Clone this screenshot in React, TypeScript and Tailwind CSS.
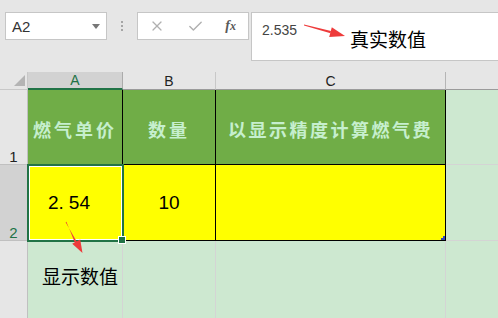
import React from 'react';
import { X, Check } from 'lucide-react';

const cjk = "font-['Liberation_Sans','Noto_Sans_CJK_SC',sans-serif]";

export default function App() {
  return (
    <div className={`relative w-[498px] h-[318px] overflow-hidden bg-[#e6e6e6] ${cjk}`}>
      {/* formula bar */}
      <div className="h-[72px] flex items-start pt-[12px] pl-[5px]">
        <div className="w-[102px] h-[28px] border border-[#c6c6c6] bg-white flex items-center justify-between pl-[6px] pr-[6px]">
          <span className="text-[15px] text-[#333] leading-none">A2</span>
          <svg width="8" height="5" viewBox="0 0 8 5">
            <path d="M0 0 L8 0 L4 5 Z" fill="#777" />
          </svg>
        </div>
        <div className="w-[30px] h-[28px] flex flex-col items-center justify-center gap-[2px]">
          <span className="w-[2px] h-[2px] bg-[#a5a5a5]" />
          <span className="w-[2px] h-[2px] bg-[#a5a5a5]" />
          <span className="w-[2px] h-[2px] bg-[#a5a5a5]" />
        </div>
        <div className="w-[112px] h-[28px] border border-[#c6c6c6] bg-white flex items-center pl-[11px] pr-[12px] justify-between">
          <X size={16} strokeWidth={1.8} color="#b0b0b0" />
          <Check size={17} strokeWidth={2} color="#b0b0b0" />
          <span className="font-['Liberation_Serif',serif] italic font-bold text-[14px] text-[#5a5a5a] leading-none">
            f<span className="text-[12px]">x</span>
          </span>
        </div>
        <div className="ml-[2px] flex-1 -mr-[1px] h-[49px] border border-[#c6c6c6] bg-white pl-[10px] pt-[5px]">
          <span className="text-[14px] text-[#444] leading-[18px]">2.535</span>
        </div>
      </div>

      {/* sheet */}
      <div className="relative grid grid-cols-[28px_95px_93px_230px_1fr] grid-rows-[18px_75px_76px_77px]">
        {/* column headers */}
        <div className="relative bg-[#e6e6e6] border-b border-[#9b9b9b] border-r border-[#c8c8c8]">
          <svg className="absolute left-0 top-0" width="28" height="18" viewBox="0 0 28 18">
            <path d="M14 14 L25 14 L25 3 Z" fill="#b4b4b4" />
          </svg>
        </div>
        <div className="bg-[#d2d2d2] border-b-2 border-b-[#217346] border-r border-r-[#ababab] flex items-center justify-center text-[14px] text-[#217346] leading-none">
          A
        </div>
        <div className="bg-[#e6e6e6] border-b border-b-[#9b9b9b] border-r border-r-[#c8c8c8] flex items-center justify-center text-[14px] text-[#222] leading-none">
          B
        </div>
        <div className="bg-[#e6e6e6] border-b border-b-[#9b9b9b] border-r border-r-[#b5b5b5] flex items-center justify-center text-[14px] text-[#222] leading-none">
          C
        </div>
        <div className="bg-[#e6e6e6] border-b border-b-[#9b9b9b]" />

        {/* row 1 */}
        <div className="bg-[#e6e6e6] border-b border-b-[#c0c0c0] border-r border-r-[#c0c0c0] flex items-end justify-center text-[15px] text-[#222] leading-[14px]">
          1
        </div>
        <div className="bg-[#70ad47] border-r border-b border-black flex items-center justify-center pt-[5px] font-bold text-[18px] tracking-[3px] text-[#c6efce] font-['Noto_Sans_CJK_SC',sans-serif]">
          燃气单价
        </div>
        <div className="bg-[#70ad47] border-r border-b border-black flex items-center justify-center pt-[5px] font-bold text-[18px] tracking-[3px] text-[#c6efce] font-['Noto_Sans_CJK_SC',sans-serif]">
          数量
        </div>
        <div className="bg-[#70ad47] border-r border-b border-black flex items-center justify-center pt-[5px] font-bold text-[18px] tracking-[2.5px] text-[#c6efce] font-['Noto_Sans_CJK_SC',sans-serif]">
          以显示精度计算燃气费
        </div>
        <div className="bg-[#cde8d0] border-b border-b-[#d4d4d4]" />

        {/* row 2 */}
        <div className="bg-[#d2d2d2] border-b border-b-[#c0c0c0] border-r border-r-[#c0c0c0] flex items-end justify-center text-[15px] text-[#217346] leading-[14px]">
          2
        </div>
        <div className="bg-[#ffff00] border-r border-b border-black flex items-center justify-center pr-[12px] text-[19px] text-black leading-none">
          2.<span className="ml-[5px]">54</span>
        </div>
        <div className="bg-[#ffff00] border-r border-b border-black flex items-center justify-center text-[19px] text-black leading-none">
          10
        </div>
        <div className="relative bg-[#ffff00] border-r border-b border-black">
          <span className="absolute right-0 bottom-0 w-[4px] h-[2px] bg-[#3446b5]" />
          <span className="absolute right-0 bottom-[2px] w-[2px] h-[2px] bg-[#3446b5]" />
        </div>
        <div className="bg-[#cde8d0] border-b border-b-[#d4d4d4]" />

        {/* row 3 */}
        <div className="bg-[#e6e6e6] border-r border-r-[#c0c0c0]" />
        <div className="bg-[#cde8d0] border-r border-r-[#d4d4d4]" />
        <div className="bg-[#cde8d0] border-r border-r-[#d4d4d4]" />
        <div className="bg-[#cde8d0] border-r border-r-[#d4d4d4]" />
        <div className="bg-[#cde8d0]" />

        {/* selection */}
        <div className="absolute left-[27px] top-[92px] w-[97px] h-[78px] border-2 border-[#217346] shadow-[inset_0_0_0_1px_white] pointer-events-none" />
        <div className="absolute left-[119px] top-[165px] w-[6px] h-[6px] bg-[#217346] shadow-[0_0_0_1px_white] pointer-events-none" />
      </div>

      {/* annotations */}
      <div className="absolute left-[350px] top-[29px] text-[19px] leading-[20px] text-black font-['Noto_Sans_CJK_SC',sans-serif]">
        真实数值
      </div>
      <div className="absolute left-[42px] top-[266px] text-[19px] leading-[20px] text-black font-['Noto_Sans_CJK_SC',sans-serif]">
        显示数值
      </div>
      <svg className="absolute left-0 top-0 pointer-events-none" width="498" height="318" viewBox="0 0 498 318">
        <path d="M304 24.6 L331 31 L330.5 33.2 L304 25.4 Z" fill="#ee3b3b" />
        <path d="M345 36 L329.2 36.9 L331.8 27.3 Z" fill="#ee3b3b" />
        <path d="M65.6 222.2 L77.2 242.4 L75.2 243.4 L66.4 221.8 Z" fill="#ee3b3b" />
        <path d="M82.5 253 L72.2 243.8 L80.2 239.6 Z" fill="#ee3b3b" />
      </svg>
    </div>
  );
}
